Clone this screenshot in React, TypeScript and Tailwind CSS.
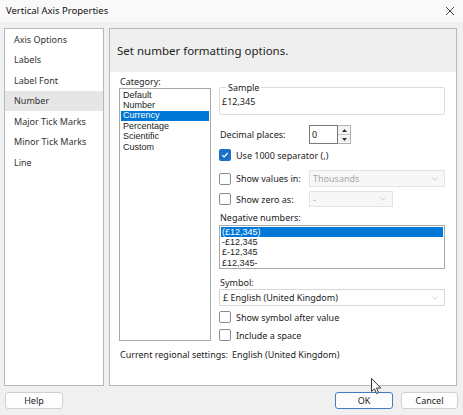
import { ChevronDown } from "lucide-react";

const menu = ["Axis Options", "Labels", "Label Font", "Number", "Major Tick Marks", "Minor Tick Marks", "Line"];
const categories = ["Default", "Number", "Currency", "Percentage", "Scientific", "Custom"];
const negatives = ["(£12,345)", "-£12,345", "£-12,345", "£12,345-"];

const listFont = { fontFamily: '"Liberation Sans", Arial, sans-serif' };

function Check({ checked, label }: { checked?: boolean; label: string }) {
  return (
    <div className="flex items-center gap-[5px] h-[14px]">
      {checked ? (
        <div className="w-[12px] h-[12px] rounded-[2px] bg-[#1a6fc9] flex items-center justify-center">
          <svg width="8" height="8" viewBox="0 0 8 8">
            <path d="M1.3 4.2 L3.1 6 L6.8 2" stroke="white" strokeWidth="1.2" fill="none" />
          </svg>
        </div>
      ) : (
        <div className="w-[12px] h-[12px] rounded-[2px] border border-[#8a8a8a] bg-white" />
      )}
      <span>{label}</span>
    </div>
  );
}

function Select({ value, width, disabled }: { value: string; width: string; disabled?: boolean }) {
  return (
    <div
      className={
        "h-full flex items-center justify-between pl-[3px] pr-[4px] border " +
        width +
        (disabled ? " border-[#e3e3e3] bg-[#f7f7f7] text-[#a8a8a8]" : " border-[#d6d6d6] bg-white")
      }
    >
      <span>{value}</span>
      <ChevronDown size={10} strokeWidth={1.2} className="text-[#a0a0a0]" />
    </div>
  );
}

export default function App() {
  return (
    <div
      className="relative w-[463px] h-[415px] bg-[#f0f0f0] text-[9px] leading-none text-[#222] overflow-hidden"
      style={{ fontFamily: '"Noto Sans", "Open Sans", sans-serif' }}
    >
      <div className="h-[22px] bg-[#f9f9f9] flex items-center justify-between pl-[6px] pr-[8px]">
        <span className="text-[9.5px] text-[#111]">Vertical Axis Properties</span>
        <svg width="10" height="10" viewBox="0 0 10 10">
          <path d="M1 1 L9 9 M9 1 L1 9" stroke="#333" strokeWidth="0.9" />
        </svg>
      </div>

      <div className="flex gap-[5px] px-[4px] mt-[6px] h-[358px]">
        <div className="w-[100px] bg-white border border-[#b8b8b8]">
          {menu.map((m) => (
            <div
              key={m}
              className={"h-[20.5px] flex items-center pl-[9px] text-[#333] " + (m === "Number" ? "bg-[#e6e6e6]" : "")}
            >
              {m}
            </div>
          ))}
        </div>

        <div className="w-[348px] bg-white border border-[#b8b8b8] flex flex-col">
          <div className="h-[43px] bg-[#efefef] flex items-center pl-[7px] text-[11.5px] text-[#222]">
            Set number formatting options.
          </div>

          <div className="flex gap-[8px] pl-[9px] pt-[3px]">
            <div className="w-[92px] flex flex-col">
              <div className="h-[13px] flex items-center pl-[1px]">Category:</div>
              <div className="h-[253px] border border-[#a8a8a8] pt-[1px] px-[1px]" style={listFont}>
                {categories.map((c) => (
                  <div
                    key={c}
                    className={
                      "h-[10.4px] flex items-center pl-[2px] " + (c === "Currency" ? "bg-[#0078d7] text-white" : "")
                    }
                  >
                    {c}
                  </div>
                ))}
              </div>
            </div>

            <div className="w-[226px] flex flex-col pt-[12px]">
              <div className="relative h-[28px] border border-[#dcdcdc] rounded-[2px] flex items-end pl-[2px] pb-[8px]">
                <span className="absolute -top-[5px] left-[6px] bg-white px-[2px]">Sample</span>
                <span>£12,345</span>
              </div>

              <div className="flex items-center h-[19px] mt-[10px]">
                <span className="w-[90px] pl-[1px]">Decimal places:</span>
                <div className="w-[29px] h-full border border-[#7a7a7a] bg-white flex items-center pl-[2px]">0</div>
                <div className="w-[13px] h-full border border-[#b0b0b0] border-l-0 bg-[#f4f4f4] flex flex-col">
                  <div className="flex-1 flex items-center justify-center border-b border-[#c8c8c8]">
                    <svg width="5" height="3" viewBox="0 0 5 3">
                      <path d="M0 3 L2.5 0 L5 3 Z" fill="#333" />
                    </svg>
                  </div>
                  <div className="flex-1 flex items-center justify-center">
                    <svg width="5" height="3" viewBox="0 0 5 3">
                      <path d="M0 0 L2.5 3 L5 0 Z" fill="#333" />
                    </svg>
                  </div>
                </div>
              </div>

              <div className="mt-[4px]">
                <Check checked label="Use 1000 separator (,)" />
              </div>

              <div className="flex items-center h-[17px] mt-[8px]">
                <div className="w-[90px]">
                  <Check label="Show values in:" />
                </div>
                <Select value="Thousands" width="w-[136px]" disabled />
              </div>

              <div className="flex items-center h-[16px] mt-[4px]">
                <div className="w-[90px]">
                  <Check label="Show zero as:" />
                </div>
                <Select value="-" width="w-[84px]" disabled />
              </div>

              <div className="h-[12px] flex items-center mt-[4px] pl-[1px]">Negative numbers:</div>

              <div className="h-[44px] border border-[#a8a8a8] mt-[2px] pt-[1px] px-[1px]" style={listFont}>
                {negatives.map((n) => (
                  <div
                    key={n}
                    className={"h-[10.4px] flex items-center pl-[1px] " + (n === "(£12,345)" ? "bg-[#0078d7] text-white" : "")}
                  >
                    {n}
                  </div>
                ))}
              </div>

              <div className="h-[12px] flex items-center mt-[7px] pl-[1px]">Symbol:</div>

              <div className="h-[17px] mt-[1px]">
                <Select value="£ English (United Kingdom)" width="w-[226px]" />
              </div>

              <div className="mt-[4px]">
                <Check label="Show symbol after value" />
              </div>
              <div className="mt-[4px]">
                <Check label="Include a space" />
              </div>
            </div>
          </div>

          <div className="flex pl-[10px] mt-[6px] h-[12px] items-center">
            <span className="w-[112px]">Current regional settings:</span>
            <span>English (United Kingdom)</span>
          </div>
        </div>
      </div>

      <div className="flex px-[5px] mt-[6px] h-[17px]">
        <button className="w-[58px] h-full bg-[#fdfdfd] border border-[#d0d0d0] rounded-[3px] text-[9px]">Help</button>
        <button className="ml-auto w-[58px] h-full bg-[#fdfdfd] border border-[#3d7fc4] rounded-[3px] text-[9px]">
          OK
        </button>
        <button className="ml-[8px] w-[57px] h-full bg-[#fdfdfd] border border-[#d0d0d0] rounded-[3px] text-[9px]">
          Cancel
        </button>
      </div>

      <svg className="absolute left-[371px] top-[378px]" width="11" height="17" viewBox="0 0 11 17">
        <path d="M0.5 0.5 L0.5 13.5 L3.5 10.8 L5.6 15.6 L7.6 14.7 L5.6 10 L9.8 10 Z" fill="white" stroke="#222" strokeWidth="0.9" />
      </svg>
    </div>
  );
}
